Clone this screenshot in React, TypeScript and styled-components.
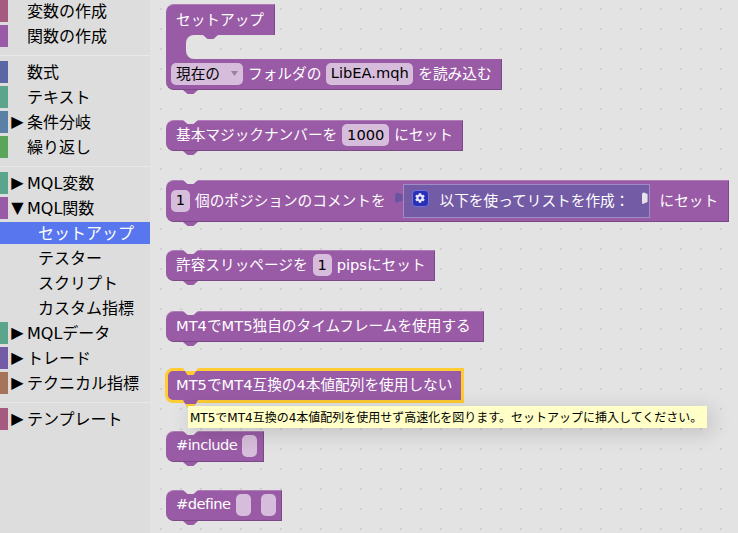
import React from 'react'
import styled, { createGlobalStyle, css } from 'styled-components'
import { FaCog } from 'react-icons/fa'

const FONT = `"DejaVu Sans", "Noto Sans CJK JP", sans-serif`
const PURPLE = '#995ba5'
const CANVAS = '#e3e3e3'
const BLOCK_SIZE = '14.67px'

const Global = createGlobalStyle`
  html, body { margin: 0; padding: 0; height: 100%; overflow: hidden; }
  body { font-family: ${FONT}; background: ${CANVAS}; }
`

const Page = styled.div`
  display: flex;
  width: 738px;
  height: 533px;
  overflow: hidden;
`

const Sidebar = styled.div`
  width: 150px;
  flex: none;
  background: #ddd;
`

const Row = styled.div<{ $selected?: boolean; $child?: boolean }>`
  display: flex;
  align-items: center;
  height: 22px;
  margin-bottom: 3px;
  font-size: 16px;
  color: #000;
  white-space: nowrap;
  ${({ $selected }) => $selected && css`background: #5877ee; color: #fff;`}
  ${({ $child }) => $child && css`padding-left: 38px;`}
`

const RowText = styled.span`
  line-height: 20px;
  padding-top: 2px;
`

const Swatch = styled.span<{ $color: string }>`
  width: 8px;
  height: 22px;
  flex: none;
  background: ${({ $color }) => $color};
`

const Arrow = styled.span`
  width: 19px;
  flex: none;
  text-align: center;
  font-size: 16px;
  line-height: 20px;
  overflow: hidden;
`

const Separator = styled.div`
  height: 1px;
  margin: 8px 0 5px;
  background: #e8e8e8;
`

const Workspace = styled.div`
  position: relative;
  flex: 1;
  height: 533px;
  background-color: ${CANVAS};
  background-image: radial-gradient(circle at 1px 1px, #d0d0d0 0.8px, transparent 1px);
  background-size: 20px 20px;
  background-position: 10px 8px;
`

const notchShape = 'polygon(0 0, 100% 0, 70% 100%, 30% 100%)'

const Block = styled.div<{ $top: number; $width: number; $height?: number; $selected?: boolean; $tight?: boolean }>`
  position: absolute;
  top: ${({ $top }) => $top}px;
  left: 16px;
  width: ${({ $width }) => $width}px;
  height: ${({ $height }) => $height ?? 31}px;
  box-sizing: border-box;
  display: flex;
  align-items: center;
  gap: 5px;
  padding: 0 0 1px ${({ $tight }) => ($tight ? 5 : 10)}px;
  color: #fff;
  font-size: ${BLOCK_SIZE};
  white-space: nowrap;
  background: ${PURPLE};
  border-radius: 8px 0 0 8px;
  border-top: 1px solid #b07cba;
  border-bottom: 1px solid #7b4985;
  border-right: 1px solid #7b4985;
  &::before {
    content: '';
    position: absolute;
    top: -1px;
    left: 17px;
    width: 15px;
    height: 4px;
    background: ${CANVAS};
    clip-path: ${notchShape};
  }
  &::after {
    content: '';
    position: absolute;
    bottom: -5px;
    left: 17px;
    width: 15px;
    height: 4px;
    background: ${PURPLE};
    clip-path: ${notchShape};
  }
  ${({ $selected }) => $selected && css`
    top: 368px;
    left: 15px;
    width: 299px;
    height: 35px;
    padding-left: 8px;
    border: 3px solid #fc3;
    &::before {
      top: -3px;
      left: 15px;
      height: 7px;
      background: linear-gradient(${CANVAS} 0 3px, #fc3 3px);
    }
    &::after {
      bottom: -8px;
      left: 15px;
      height: 8px;
      background: linear-gradient(${PURPLE} 0 4px, #fc3 4px);
    }
  `}
`

const Label = styled.span`
  padding-bottom: 3px;
`

const DirectiveLabel = styled(Label)`
  letter-spacing: -0.5px;
`

const Stack = styled.div`
  position: absolute;
  top: 4px;
  left: 16px;
  display: flex;
  flex-direction: column;
  align-items: flex-start;
`

const StackHead = styled.div`
  position: relative;
  width: 109px;
  height: 31px;
  box-sizing: border-box;
  padding: 0 0 1px 10px;
  display: flex;
  align-items: center;
  color: #fff;
  font-size: ${BLOCK_SIZE};
  background: ${PURPLE};
  border-radius: 8px 0 0 0;
  border-right: 1px solid #7b4985;
  border-top: 1px solid #b07cba;
  &::after {
    content: '';
    position: absolute;
    top: 100%;
    left: 37px;
    z-index: 2;
    width: 15px;
    height: 4px;
    background: ${PURPLE};
    clip-path: ${notchShape};
  }
`

const StackSpine = styled.div`
  position: relative;
  width: 40px;
  height: 24px;
  background: ${PURPLE};
  &::after {
    content: '';
    position: absolute;
    inset: 0 0 0 20px;
    background: ${CANVAS};
    border-radius: 8px 0 0 8px;
  }
`

const StackFoot = styled.div`
  position: relative;
  width: 336px;
  height: 31px;
  box-sizing: border-box;
  display: flex;
  align-items: center;
  gap: 5px;
  padding: 0 0 1px 5px;
  color: #fff;
  font-size: ${BLOCK_SIZE};
  white-space: nowrap;
  background: ${PURPLE};
  border-radius: 0 0 0 8px;
  border-right: 1px solid #7b4985;
  border-bottom: 1px solid #7b4985;
  &::after {
    content: '';
    position: absolute;
    bottom: -5px;
    left: 17px;
    width: 15px;
    height: 4px;
    background: ${PURPLE};
    clip-path: ${notchShape};
  }
`

const Field = styled.span<{ $width: number; $gap?: number }>`
  display: inline-flex;
  align-items: center;
  justify-content: center;
  flex: none;
  height: 22px;
  width: ${({ $width }) => $width}px;
  margin-left: ${({ $gap }) => $gap ?? 0}px;
  padding-bottom: 2px;
  box-sizing: border-box;
  border-radius: 5px;
  background: #d6bddb;
  color: #000;
  font-size: ${BLOCK_SIZE};
`

const Caret = styled.span`
  width: 7px;
  height: 5px;
  margin: 2px 0 0 11px;
  background: #9d7fa6;
  clip-path: polygon(0 0, 100% 0, 50% 100%);
`

const InnerBlock = styled.div`
  position: relative;
  display: flex;
  align-items: center;
  flex: none;
  width: 247px;
  height: 34px;
  margin-left: 12px;
  box-sizing: border-box;
  padding-left: 8px;
  gap: 11px;
  background: #745ba5;
  border: 1px solid #a08cc4;
  color: #fff;
  &::before {
    content: '';
    position: absolute;
    left: -9px;
    top: 7px;
    width: 8px;
    height: 12px;
    background: #6a54a0;
    border-radius: 4px 0 0 4px;
    clip-path: polygon(0 0, 100% 25%, 100% 75%, 0 100%);
  }
  &::after {
    content: '';
    position: absolute;
    right: 1px;
    top: 7px;
    width: 6px;
    height: 13px;
    background: #e8e0ea;
    border-radius: 3px 0 0 3px;
    clip-path: polygon(0 0, 100% 20%, 100% 80%, 0 100%);
  }
`

const MutatorIcon = styled.span`
  display: inline-flex;
  align-items: center;
  justify-content: center;
  width: 17px;
  height: 17px;
  border-radius: 4px;
  margin-bottom: 5px;
  background: #2a2fb8;
  border: 1px solid #6f73d8;
  box-sizing: border-box;
  color: #e8e8ff;
`

const TrailingLabel = styled(Label)`
  margin-left: 5px;
`

const Tooltip = styled.div`
  position: absolute;
  top: 406px;
  left: 38px;
  width: 519px;
  height: 22px;
  box-sizing: border-box;
  padding: 0 0 2px 2px;
  display: flex;
  align-items: center;
  background: #ffffc7;
  color: #000;
  font-size: 12px;
  white-space: nowrap;
  box-shadow: 4px 4px 20px 1px rgba(0, 0, 0, 0.15);
  z-index: 5;
`

const menu = [
  { label: '変数の作成', color: '#a55b80' },
  { label: '関数の作成', color: '#995ba5' },
  'sep',
  { label: '数式', color: '#5b67a5' },
  { label: 'テキスト', color: '#5ba58c' },
  { label: '条件分岐', color: '#5b80a5', arrow: '▶' },
  { label: '繰り返し', color: '#5ba55b' },
  'sep',
  { label: 'MQL変数', color: '#5ba58c', arrow: '▶' },
  { label: 'MQL関数', color: '#995ba5', arrow: '▼' },
  { label: 'セットアップ', selected: true },
  { label: 'テスター' },
  { label: 'スクリプト' },
  { label: 'カスタム指標' },
  { label: 'MQLデータ', color: '#5ba58c', arrow: '▶' },
  { label: 'トレード', color: '#745ba5', arrow: '▶' },
  { label: 'テクニカル指標', color: '#a5745b', arrow: '▶' },
  'sep',
  { label: 'テンプレート', color: '#a55b80', arrow: '▶' },
] as const

export default function App() {
  return (
    <>
      <Global />
      <Page>
        <Sidebar>
          {menu.map((item, i) => {
            if (item === 'sep') return <Separator key={i} />
            if (!('color' in item)) {
              return (
                <Row key={i} $child $selected={'selected' in item}>
                  <RowText>{item.label}</RowText>
                </Row>
              )
            }
            return (
              <Row key={i}>
                <Swatch $color={item.color} />
                <Arrow>{'arrow' in item ? item.arrow : ''}</Arrow>
                <RowText>{item.label}</RowText>
              </Row>
            )
          })}
        </Sidebar>
        <Workspace>
          <Stack>
            <StackHead>
              <Label>セットアップ</Label>
            </StackHead>
            <StackSpine />
            <StackFoot>
              <Field $width={72}>
                現在の<Caret />
              </Field>
              <Label>フォルダの</Label>
              <Field $width={87}>LibEA.mqh</Field>
              <Label>を読み込む</Label>
            </StackFoot>
          </Stack>

          <Block $top={120} $width={297}>
            <Label>基本マジックナンバーを</Label>
            <Field $width={47}>1000</Field>
            <Label>にセット</Label>
          </Block>

          <Block $top={180} $width={563} $height={42} $tight>
            <Field $width={19}>1</Field>
            <Label>個のポジションのコメントを</Label>
            <InnerBlock>
              <MutatorIcon>
                <FaCog size={10} />
              </MutatorIcon>
              <Label>以下を使ってリストを作成：</Label>
            </InnerBlock>
            <TrailingLabel>にセット</TrailingLabel>
          </Block>

          <Block $top={250} $width={269}>
            <Label>許容スリッページを</Label>
            <Field $width={19}>1</Field>
            <Label>pipsにセット</Label>
          </Block>

          <Block $top={311} $width={318}>
            <Label>MT4でMT5独自のタイムフレームを使用する</Label>
          </Block>

          <Block $top={371} $width={297} $selected>
            <Label>MT5でMT4互換の4本値配列を使用しない</Label>
          </Block>

          <Tooltip>MT5でMT4互換の4本値配列を使用せず高速化を図ります。セットアップに挿入してください。</Tooltip>

          <Block $top={431} $width={98}>
            <DirectiveLabel>#include</DirectiveLabel>
            <Field $width={15} />
          </Block>

          <Block $top={490} $width={116}>
            <DirectiveLabel>#define</DirectiveLabel>
            <Field $width={15} />
            <Field $width={15} $gap={5} />
          </Block>
        </Workspace>
      </Page>
    </>
  )
}
